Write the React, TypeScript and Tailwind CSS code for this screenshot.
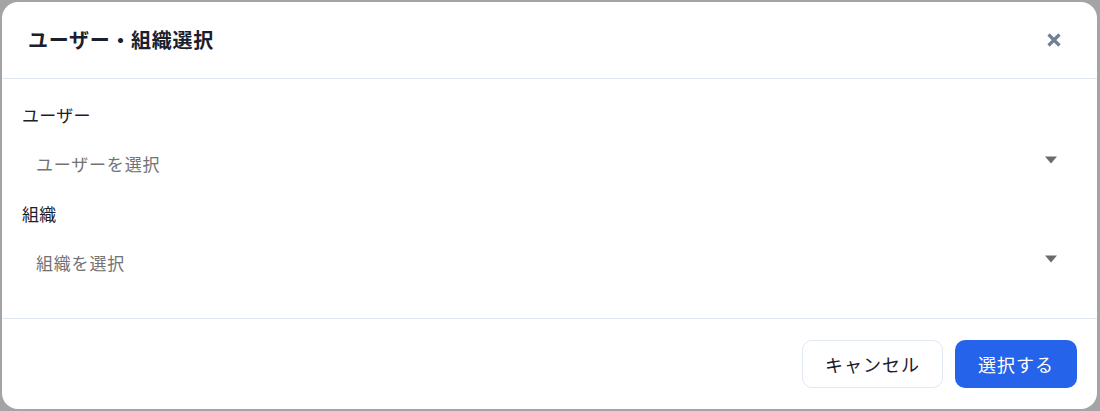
import React from "react";

const font = { fontFamily: '"Noto Sans CJK JP", "Noto Sans", sans-serif' };

function Caret() {
  return (
    <svg width="14" height="8" viewBox="0 0 14 8" className="shrink-0">
      <path d="M1 0.5 L13 0.5 L7 7.5 Z" fill="#6b6b6b" />
    </svg>
  );
}

function Field({ label, placeholder }: { label: string; placeholder: string }) {
  return (
    <div className="flex flex-col">
      <div className="h-[24px] flex items-center text-[17px] text-[#1a202c] tracking-[0.3px]">{label}</div>
      <div className="mt-[12px] h-[50px] flex items-center justify-between pl-[14px] pr-[17px]">
        <span className="text-[17px] tracking-[0.8px] text-[#737373]">{placeholder}</span>
        <div className="-mt-[8px]">
          <Caret />
        </div>
      </div>
    </div>
  );
}

export default function App() {
  return (
    <div className="w-[1100px] h-[411px] bg-[#a4a4a6] pt-[2px] pl-[2px] overflow-hidden relative" style={font}>
      <div className="w-[1095px] h-[407px] bg-white rounded-[16px] flex flex-col overflow-hidden">
        <div className="h-[76px] shrink-0 flex items-center justify-between pl-[26px] pr-[35px] border-b border-[#e2e8f0] box-content">
          <h2 className="text-[20px] font-bold text-[#1a202c] tracking-[0.7px]">ユーザー・組織選択</h2>
          <svg width="16" height="16" viewBox="0 0 16 16">
            <path d="M2.5 2.5 L13.5 13.5 M13.5 2.5 L2.5 13.5" stroke="#718096" strokeWidth="3.2" strokeLinecap="butt" />
          </svg>
        </div>
        <div className="flex-1 flex flex-col gap-[13px] pt-[24px] pl-[20px] pr-[22px]">
          <Field label="ユーザー" placeholder="ユーザーを選択" />
          <Field label="組織" placeholder="組織を選択" />
        </div>
        <div className="h-[91px] shrink-0 border-t border-[#e2e8f0] flex items-center justify-end gap-[12px] pr-[20px]">
          <button className="w-[141px] h-[48px] rounded-[10px] border border-[#e2e8f0] bg-white text-[18px] text-[#1a202c] tracking-[1px]">
            キャンセル
          </button>
          <button className="w-[122px] h-[48px] rounded-[10px] bg-[#2563eb] text-[18px] text-white tracking-[1px]">
            選択する
          </button>
        </div>
      </div>
    </div>
  );
}
